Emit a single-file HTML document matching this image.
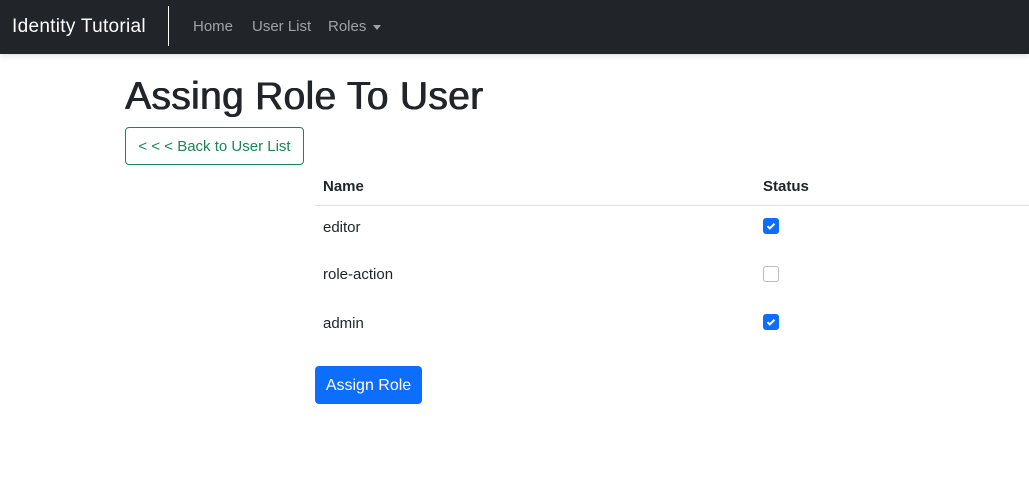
<!DOCTYPE html>
<html><head><style>
*{margin:0;padding:0;box-sizing:border-box}
body{width:1029px;height:477px;background:#fff;font-family:"Liberation Sans",sans-serif;color:#212529;position:relative;overflow:hidden}
.nav{position:absolute;left:0;top:0;width:1029px;height:54px;background:#212529;box-shadow:0 2px 6px rgba(0,0,0,.12)}
.a{position:absolute;white-space:nowrap}
.cb{position:absolute;left:763px;width:16px;height:16px;border-radius:3px}
.on{background:#0d6efd}
.off{border:1px solid #bbb;background:#fff}
</style></head><body>
<div class="nav">
<div class="a" style="left:12px;top:16px;font-size:19px;color:#fff;letter-spacing:0.3px">Identity Tutorial</div>
<div class="a" style="left:168px;top:6px;width:1px;height:40px;background:#fff"></div>
<div class="a" style="left:193px;top:18px;font-size:15px;color:#a0a3a6">Home</div>
<div class="a" style="left:252px;top:18px;font-size:15px;color:#a0a3a6">User List</div>
<div class="a" style="left:328px;top:18px;font-size:15px;color:#a0a3a6">Roles</div>
<div class="a" style="left:373px;top:25px;border-left:4px solid transparent;border-right:4px solid transparent;border-top:5px solid #a0a3a6"></div>
</div>
<div class="a" style="left:125px;top:75px;font-size:39px;letter-spacing:0.3px;text-shadow:0.6px 0 0 #212529,-0.3px 0 0 #212529">Assing Role To User</div>
<div class="a" style="left:125px;top:127px;width:179px;height:38px;border:1px solid #198754;border-radius:4px;color:#198754;font-size:15px;line-height:38px;text-align:center">&lt; &lt; &lt; Back to User List</div>
<div class="a" style="left:323px;top:178px;font-size:15px;font-weight:bold">Name</div>
<div class="a" style="left:763px;top:178px;font-size:15px;font-weight:bold">Status</div>
<div class="a" style="left:315px;top:205px;width:714px;height:1px;background:#dee2e6"></div>
<div class="a" style="left:323px;top:219px;font-size:15px">editor</div>
<div class="a" style="left:323px;top:266px;font-size:15px">role-action</div>
<div class="a" style="left:323px;top:315px;font-size:15px">admin</div>
<div class="cb on" style="top:218px"><svg width="16" height="16" viewBox="0 0 16 16"><path d="M4.5 8.2l2.3 2.3 4.7-4.8" stroke="#fff" stroke-width="2" fill="none"/></svg></div>
<div class="cb off" style="top:266px"></div>
<div class="cb on" style="top:314px"><svg width="16" height="16" viewBox="0 0 16 16"><path d="M4.5 8.2l2.3 2.3 4.7-4.8" stroke="#fff" stroke-width="2" fill="none"/></svg></div>
<div class="a" style="left:315px;top:366px;width:107px;height:38px;background:#0d6efd;border-radius:4px;color:#fff;font-size:16px;line-height:39px;text-align:center">Assign Role</div>
</body></html>
